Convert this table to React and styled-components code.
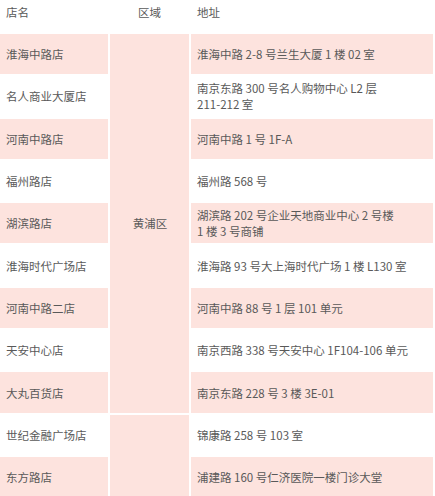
import React from "react";
import styled, { createGlobalStyle } from "styled-components";

const GlobalStyle = createGlobalStyle`
  html, body {
    margin: 0;
    padding: 0;
    background: #fff;
  }
  body {
    font-family: "Noto Sans CJK SC", "Noto Sans", sans-serif;
    overflow: hidden;
  }
`;

const Table = styled.table`
  margin: -2px 0 0 -2px;
  width: 437px;
  border-collapse: separate;
  border-spacing: 2px;
  table-layout: fixed;
  font-size: 11.5px;
  color: #595959;
`;

const HeadCell = styled.th`
  box-sizing: border-box;
  height: 32px;
  padding: 4px 6px 0;
  font-weight: normal;
  text-align: ${(p) => (p.$center ? "center" : "left")};
  vertical-align: top;
  line-height: 17px;
`;

const Cell = styled.td`
  box-sizing: border-box;
  height: 40.3px;
  padding: 0 5px 0 6px;
  line-height: 16px;
  vertical-align: middle;
  background: ${(p) => (p.$pink ? "#fde3de" : "#fff")};
  text-align: ${(p) => (p.$center ? "center" : "left")};
`;

const stores = [
  ["淮海中路店", ["淮海中路 2-8 号兰生大厦 1 楼 02 室"]],
  ["名人商业大厦店", ["南京东路 300 号名人购物中心 L2 层", "211-212 室"]],
  ["河南中路店", ["河南中路 1 号 1F-A"]],
  ["福州路店", ["福州路 568 号"]],
  ["湖滨路店", ["湖滨路 202 号企业天地商业中心 2 号楼", "1 楼 3 号商铺"]],
  ["淮海时代广场店", ["淮海路 93 号大上海时代广场 1 楼 L130 室"]],
  ["河南中路二店", ["河南中路 88 号 1 层 101 单元"]],
  ["天安中心店", ["南京西路 338 号天安中心 1F104-106 单元"]],
  ["大丸百货店", ["南京东路 228 号 3 楼 3E-01"]],
  ["世纪金融广场店", ["锦康路 258 号 103 室"]],
  ["东方路店", ["浦建路 160 号仁济医院一楼门诊大堂"]],
];

const regions = { 0: ["黄浦区", 9], 9: ["", 2] };

export default function App() {
  return (
    <>
      <GlobalStyle />
      <Table>
        <colgroup>
          <col style={{ width: 108 }} />
          <col style={{ width: 79 }} />
          <col style={{ width: 242 }} />
        </colgroup>
        <thead>
          <tr>
            <HeadCell>店名</HeadCell>
            <HeadCell $center>区域</HeadCell>
            <HeadCell>地址</HeadCell>
          </tr>
        </thead>
        <tbody>
          {stores.map(([name, addr], i) => {
            const pink = i % 2 === 0;
            const region = regions[i];
            return (
              <tr key={name}>
                <Cell $pink={pink}>{name}</Cell>
                {region && (
                  <Cell $pink $center rowSpan={region[1]}>
                    {region[0]}
                  </Cell>
                )}
                <Cell $pink={pink}>
                  {addr.map((line, j) => (
                    <div key={j}>{line}</div>
                  ))}
                </Cell>
              </tr>
            );
          })}
        </tbody>
      </Table>
    </>
  );
}
